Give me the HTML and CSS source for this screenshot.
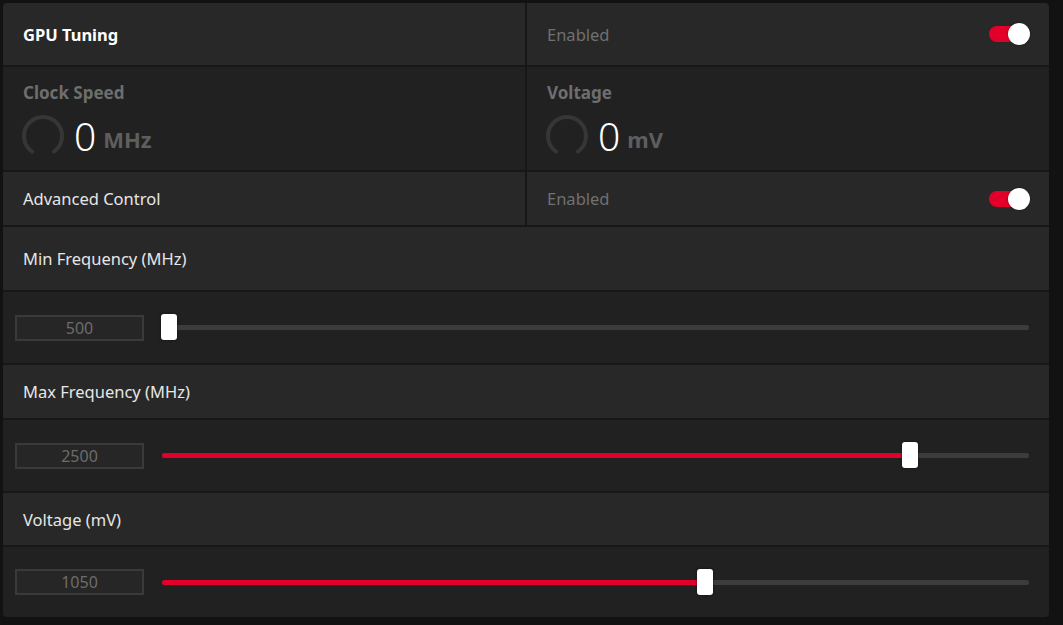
FILE: index.html
```html
<!DOCTYPE html>
<html>
<head>
<meta charset="utf-8">
<link rel="stylesheet" href="styles.css">
</head>
<body>
<div class="panel">
  <div class="row split r-top">
    <div class="cell light"><span class="title">GPU Tuning</span></div>
    <div class="cell light between"><span class="muted">Enabled</span><span class="toggle"><span class="knob"></span></span></div>
  </div>
  <div class="row split r-stats">
    <div class="cell dark stat">
      <div class="stat-label">Clock Speed</div>
      <div class="stat-value">
        <svg class="gauge" width="44" height="44" viewBox="0 0 44 44"><path d="M11.1 37.6 A19 19 0 1 1 32.9 37.6" fill="none" stroke="#363636" stroke-width="4" stroke-linecap="round"/></svg>
        <span class="num">0</span><span class="unit">MHz</span>
      </div>
    </div>
    <div class="cell dark stat">
      <div class="stat-label">Voltage</div>
      <div class="stat-value">
        <svg class="gauge" width="44" height="44" viewBox="0 0 44 44"><path d="M11.1 37.6 A19 19 0 1 1 32.9 37.6" fill="none" stroke="#363636" stroke-width="4" stroke-linecap="round"/></svg>
        <span class="num">0</span><span class="unit">mV</span>
      </div>
    </div>
  </div>
  <div class="row split r-adv">
    <div class="cell light"><span class="label">Advanced Control</span></div>
    <div class="cell light between"><span class="muted">Enabled</span><span class="toggle"><span class="knob"></span></span></div>
  </div>
  <div class="row head h-first"><span class="label">Min Frequency (MHz)</span></div>
  <div class="row slider-row">
    <div class="box">500</div>
    <div class="track"><div class="fill" style="width:0%"></div><div class="thumb" style="left:-0.1%"></div></div>
  </div>
  <div class="row head"><span class="label">Max Frequency (MHz)</span></div>
  <div class="row slider-row">
    <div class="box">2500</div>
    <div class="track"><div class="fill" style="width:86.9%"></div><div class="thumb" style="left:85.4%"></div></div>
  </div>
  <div class="row head h-last"><span class="label">Voltage (mV)</span></div>
  <div class="row slider-row last">
    <div class="box">1050</div>
    <div class="track"><div class="fill" style="width:62.7%"></div><div class="thumb" style="left:61.75%"></div></div>
  </div>
</div>
</body>
</html>
```

FILE: styles.css
```css
* { box-sizing: border-box; }
html, body { margin: 0; padding: 0; background: #121212; }
body {
  width: 1063px;
  height: 625px;
  padding: 3px 14px 0 3px;
  font-family: "Noto Sans", "Open Sans", sans-serif;
  font-size: 16.5px;
}
.panel {
  width: 1046px;
  display: flex;
  flex-direction: column;
  gap: 2px;
  background: #171717;
  border-radius: 4px;
  overflow: hidden;
}
.row { display: flex; }
.split { gap: 2px; }
.r-top { height: 62px; }
.r-stats { height: 103px; }
.r-adv { height: 53px; }
.cell {
  flex: 1;
  display: flex;
  align-items: center;
  padding: 0 20px;
}
.light { background: #282828; }
.dark { background: #212121; }
.between { justify-content: space-between; }
.title { color: #ffffff; font-weight: 700; font-size: 16.5px; }
.label { color: #e6e6e6; font-size: 16.5px; }
.muted { color: #707070; font-size: 16.5px; }
.toggle {
  position: relative;
  width: 40px;
  height: 16px;
  border-radius: 8px;
  background: #e2002b;
}
.knob {
  position: absolute;
  right: -1px;
  top: -3px;
  width: 22px;
  height: 22px;
  border-radius: 50%;
  background: #ffffff;
  box-shadow: 0 0 2px rgba(0,0,0,0.5);
}
.stat {
  flex-direction: column;
  align-items: flex-start;
  padding: 14px 20px 0 18px;
}
.stat-label { color: #6e6e6e; font-weight: 700; font-size: 17px; padding-left: 2px; }
.stat-value { display: flex; align-items: center; margin-top: 10px; }
.gauge { display: block; }
.num { color: #ffffff; font-weight: 300; font-size: 39px; line-height: 44px; margin-left: 9px; }
.unit { color: #5e5e5e; font-weight: 700; font-size: 22px; margin-left: 7px; margin-top: 5px; }
.head {
  background: #282828;
  height: 53px;
  align-items: center;
  padding-left: 20px;
}
.h-first { height: 63px; }
.h-last { height: 52px; }
.slider-row {
  background: #212121;
  height: 71px;
  align-items: center;
  padding: 0 20px 0 12px;
}
.slider-row.last { height: 70px; }
.box {
  width: 129px;
  height: 26px;
  border: 2px solid #3a3a3a;
  background: #262626;
  color: #6c6c6c;
  font-size: 16px;
  display: flex;
  align-items: center;
  justify-content: center;
  margin-right: 18px;
}
.track {
  position: relative;
  flex: 1;
  height: 5px;
  border-radius: 3px;
  background: #3c3c3c;
}
.fill {
  height: 100%;
  border-radius: 3px;
  background: #e2002b;
}
.thumb {
  position: absolute;
  top: -11px;
  width: 16px;
  height: 26px;
  border-radius: 3px;
  background: #ffffff;
  box-shadow: 0 0 3px rgba(0,0,0,0.6);
}
```
